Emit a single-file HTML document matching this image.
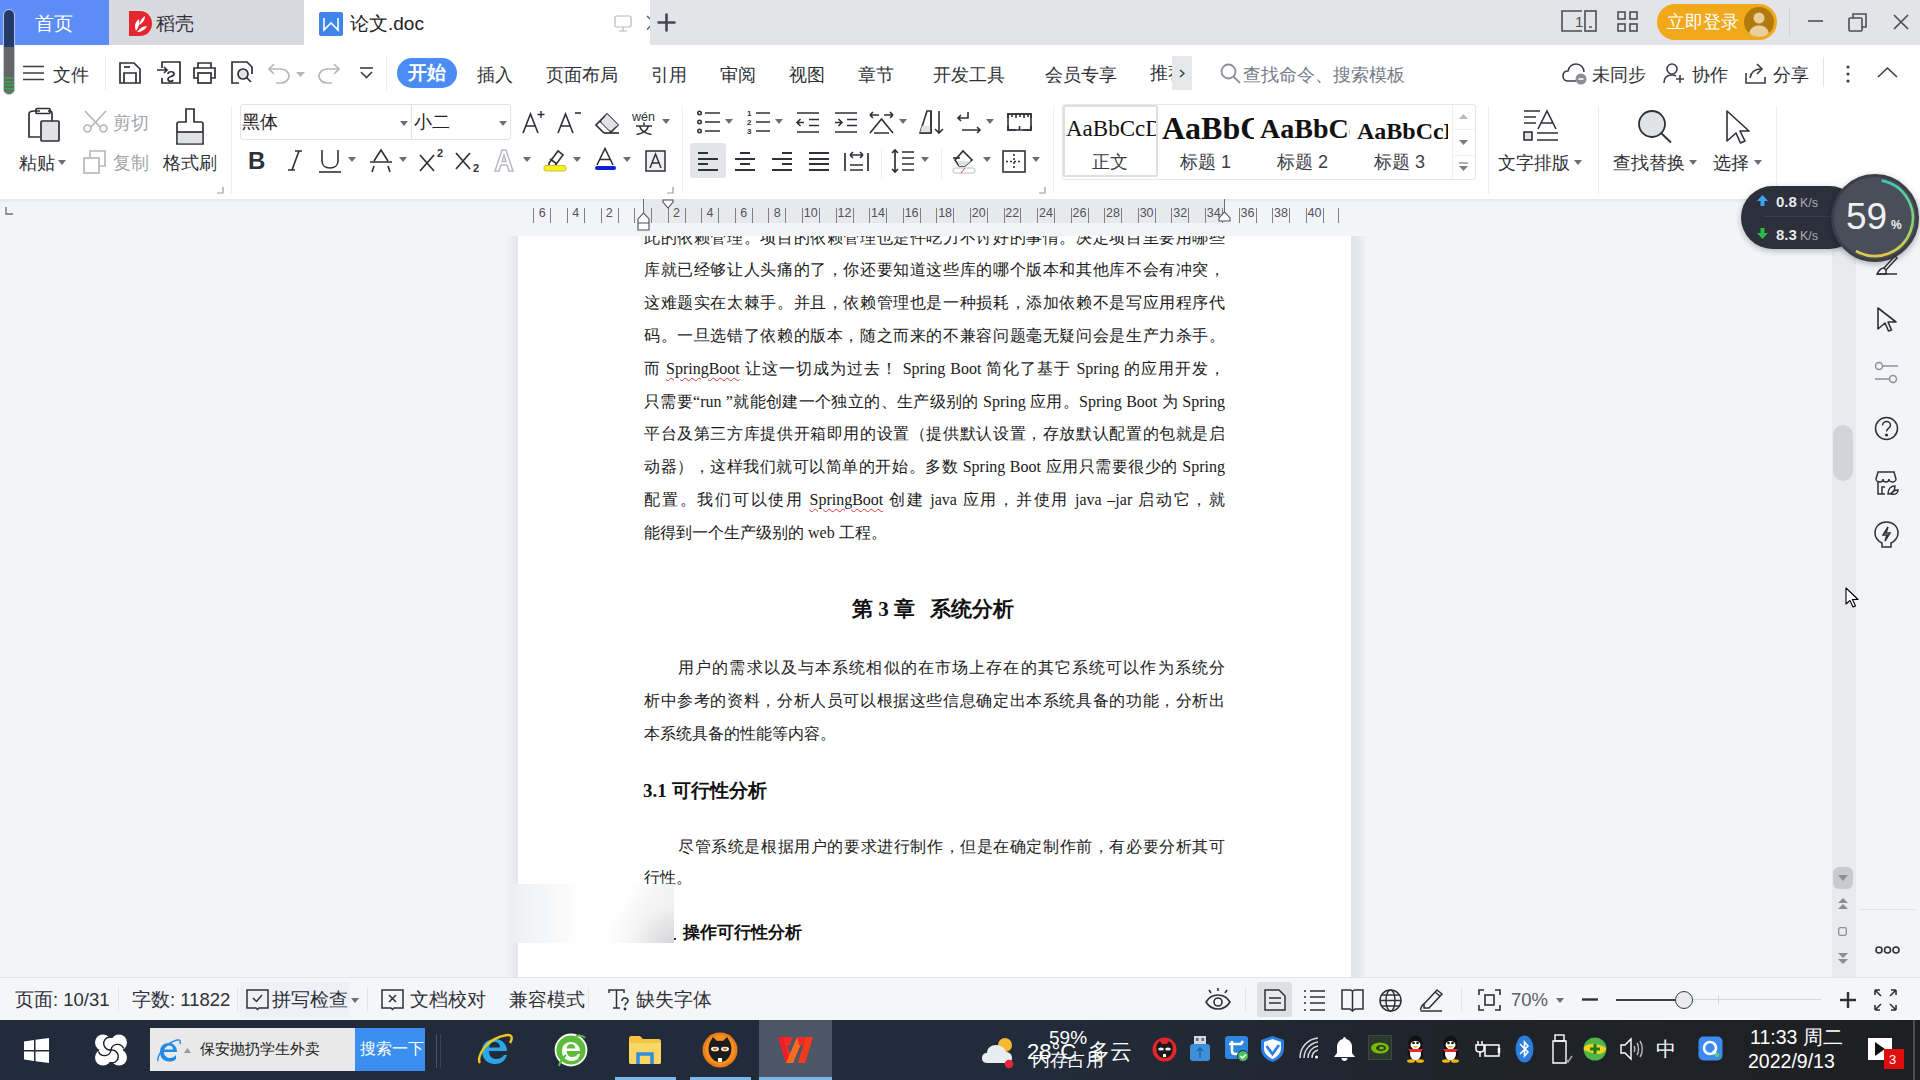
<!DOCTYPE html>
<html><head><meta charset="utf-8">
<style>
*{box-sizing:border-box;margin:0;padding:0}
html,body{width:1920px;height:1080px;overflow:hidden;background:#f3f4f7;font-family:"Liberation Sans",sans-serif;color:#2f3138}
.a{position:absolute}
svg{position:absolute;overflow:visible}
.t{position:absolute;white-space:nowrap;line-height:1}
#title{left:0;top:0;width:1920px;height:45px;background:#e3e4e8}
#menu{left:0;top:45px;width:1920px;height:55px;background:#fff}
#ribbon{left:0;top:100px;width:1920px;height:99px;background:#fff}
#ruler{left:0;top:199px;width:1832px;height:37px;background:#f3f4f7}
#page{left:518px;top:236px;width:833px;height:741px;background:#fff;overflow:hidden}
#status{left:0;top:977px;width:1920px;height:43px;background:#f5f6f8;border-top:1px solid #e3e4e8}
#task{left:0;top:1020px;width:1920px;height:60px;background:linear-gradient(90deg,#212b3b 0%,#222b39 55%,#1f2328 80%,#1e1f22 100%)}
.mi{font-size:18px;color:#2f3138}
.rt{font-size:18px;color:#2f3138}
.gray{color:#a3a5ab}
.doc{position:absolute;left:126px;width:581px;font-family:"Liberation Serif",serif;font-size:16px;line-height:17px;color:#1a1a1a;white-space:nowrap;text-align:justify;text-align-last:justify}
.doc.l{text-align-last:left}
u.sq{text-decoration:underline wavy #d9363e;text-decoration-thickness:1px;text-underline-offset:3px}
</style></head><body>
<!-- TITLE BAR -->
<div id="title" class="a">
  <div class="a" style="left:0;top:0;width:109px;height:45px;background:#5c8df6"></div>
  <div class="t" style="left:35px;top:15px;font-size:18.5px;color:#fff">首页</div>
  <div class="a" style="left:109px;top:0;width:195px;height:45px;background:#d9dadf"></div>
  <svg style="left:129px;top:11px" width="23" height="25" viewBox="0 0 23 25"><path d="M0 0H11C18 0 23 5.5 23 12.5S18 25 11 25H0Z" fill="#e5262f"/><path d="M7 20C5 15 6 11 10 8C11 12 10 16 7 20ZM8 21C11 17 14 15 18 15C16 19 12 21 8 21ZM10 14C11 10 13 7 16 5C16 9 14 12 10 14Z" fill="#fff"/></svg>
  <div class="t" style="left:156px;top:15px;font-size:18.5px;color:#2f3138">稻壳</div>
  <div class="a" style="left:304px;top:0;width:346px;height:45px;background:#fff"></div>
  <svg style="left:319px;top:12px" width="24" height="24" viewBox="0 0 24 24"><rect width="24" height="24" rx="2" fill="#3f86ec"/><path d="M5 6V18L12 11L19 18V6" stroke="#fff" stroke-width="1.6" fill="none" stroke-linejoin="miter"/></svg>
  <div class="t" style="left:350px;top:14px;font-size:19px;color:#1f2126">论文.doc</div>
  <svg style="left:614px;top:15px" width="18" height="17" viewBox="0 0 18 17"><rect x="1" y="1" width="16" height="11" rx="1.5" fill="none" stroke="#b5b7bd" stroke-width="1.2"/><path d="M9 12V16M5 16H13" stroke="#b5b7bd" stroke-width="1.2"/></svg>
  <svg style="left:647px;top:15px" width="4" height="16"><path d="M0 1L3.5 4.5M0 14.5L3.5 11" stroke="#555a66" stroke-width="1.3"/></svg><div class="a" style="left:650px;top:0;width:42px;height:45px;background:#e3e4e8"></div>
  <svg style="left:657px;top:13px" width="19" height="19" viewBox="0 0 19 19"><path d="M9.5 1.5V17.5M1.5 9.5H17.5" stroke="#3f4657" stroke-width="2.6" stroke-linecap="round"/></svg>
  <!-- right controls -->
  <svg style="left:1561px;top:10px" width="36" height="22" viewBox="0 0 36 22"><path d="M21 21H1V1H21" fill="none" stroke="#4b4e56" stroke-width="1.6"/><rect x="24" y="1" width="11" height="20" fill="none" stroke="#4b4e56" stroke-width="1.6"/><path d="M28 17H31" stroke="#4b4e56" stroke-width="1.4"/><text x="14" y="17" font-size="15" font-family="Liberation Sans" fill="#4b4e56">1</text></svg>
  <svg style="left:1617px;top:11px" width="21" height="21" viewBox="0 0 21 21" fill="none" stroke="#4b4e56" stroke-width="1.6"><rect x="1" y="1" width="7" height="7"/><rect x="13" y="1" width="7" height="7"/><rect x="1" y="13" width="7" height="7"/><rect x="13" y="13" width="7" height="7"/></svg>
  <div class="a" style="left:1657px;top:4px;width:120px;height:36px;border-radius:18px;background:#f1a81b"></div>
  <div class="t" style="left:1667px;top:13px;font-size:18px;color:#fff">立即登录</div>
  <svg style="left:1744px;top:7px" width="30" height="30" viewBox="0 0 30 30"><circle cx="15" cy="15" r="15" fill="#b07a0d"/><circle cx="15" cy="11" r="5.5" fill="#e8cf9a"/><path d="M5 26C7 20 11 18.5 15 18.5S23 20 25 26C22 29 18 30 15 30S8 29 5 26Z" fill="#e8cf9a"/></svg>
  <div class="a" style="left:1789px;top:8px;width:1px;height:28px;background:#cfd0d4"></div>
  <svg style="left:1808px;top:20px" width="15" height="2"><path d="M0 1H15" stroke="#4b4e56" stroke-width="1.6"/></svg>
  <svg style="left:1848px;top:13px" width="19" height="19" viewBox="0 0 19 19" fill="none" stroke="#4b4e56" stroke-width="1.6"><rect x="1" y="5" width="13" height="13" rx="1"/><path d="M5 5V1H18V14H14"/></svg>
  <svg style="left:1893px;top:14px" width="16" height="16" viewBox="0 0 16 16"><path d="M1 1L15 15M15 1L1 15" stroke="#4b4e56" stroke-width="1.7"/></svg>
</div>
<!-- MENU BAR -->
<div id="menu" class="a">
  <svg style="left:23px;top:20px" width="21" height="16" viewBox="0 0 21 16"><path d="M0 1.5H21M0 8H21M0 14.5H21" stroke="#3b3e46" stroke-width="1.7"/></svg>
  <div class="t mi" style="left:53px;top:20.5px">文件</div>
  <div class="a" style="left:105px;top:10px;width:1px;height:35px;background:#ececef"></div>
  <!-- save -->
  <svg style="left:119px;top:17px" width="22" height="22" viewBox="0 0 22 22" fill="none" stroke="#2f3138" stroke-width="1.7"><path d="M1 1H15L21 7V21H1Z"/><path d="M5 21V11H17V21"/><path d="M5 5H11"/></svg>
  <!-- export -->
  <svg style="left:157px;top:16px" width="24" height="23" viewBox="0 0 24 23" fill="none" stroke="#2f3138" stroke-width="1.7"><path d="M5 7V1H23V22H5V17"/><path d="M0 9H10M7 6L10 9L7 12"/><path d="M11 13C11 10 17 10 17 13C17 16 11 15 11 18C11 21 15 21 16 19"/></svg>
  <!-- print -->
  <svg style="left:193px;top:17px" width="23" height="22" viewBox="0 0 23 22" fill="none" stroke="#2f3138" stroke-width="1.7"><path d="M5 6V1H18V6"/><path d="M5 16H1V6H22V16H18"/><rect x="5" y="11" width="13" height="10"/></svg>
  <!-- preview -->
  <svg style="left:231px;top:16px" width="23" height="23" viewBox="0 0 23 23" fill="none" stroke="#2f3138" stroke-width="1.7"><path d="M8 22H1V1H16L21 6V13"/><circle cx="12" cy="13" r="5" fill="#e1e2e6"/><path d="M15.5 16.5L20 21"/></svg>
  <!-- undo -->
  <svg style="left:268px;top:18px" width="22" height="21" viewBox="0 0 22 21" fill="none" stroke="#b5b7bc" stroke-width="1.7"><path d="M6 1L1 6L6 11"/><path d="M1 6H13C17 6 21 9 21 13S17 20 13 20H8"/></svg>
  <svg style="left:296px;top:27px" width="9" height="5"><path d="M0 0H9L4.5 5Z" fill="#b5b7bc"/></svg>
  <!-- redo -->
  <svg style="left:318px;top:18px" width="22" height="21" viewBox="0 0 22 21" fill="none" stroke="#b5b7bc" stroke-width="1.7"><path d="M16 1L21 6L16 11"/><path d="M21 6H9C5 6 1 9 1 13S5 20 9 20H14"/></svg>
  <!-- more -->
  <svg style="left:360px;top:22px" width="13" height="12" viewBox="0 0 13 12" fill="none" stroke="#3b3e46" stroke-width="1.6"><path d="M0 1H13"/><path d="M1 5L6.5 10.5L12 5"/></svg>
  <div class="a" style="left:386px;top:10px;width:1px;height:35px;background:#ececef"></div>
  <div class="a" style="left:397px;top:13px;width:60px;height:30px;border-radius:15px;background:#4a8bf4"></div>
  <div class="t" style="left:408px;top:18px;font-size:19px;font-weight:bold;color:#fff">开始</div>
  <div class="t mi" style="left:477px;top:20.5px">插入</div>
  <div class="t mi" style="left:546px;top:20.5px">页面布局</div>
  <div class="t mi" style="left:651px;top:20.5px">引用</div>
  <div class="t mi" style="left:720px;top:20.5px">审阅</div>
  <div class="t mi" style="left:789px;top:20.5px">视图</div>
  <div class="t mi" style="left:858px;top:20.5px">章节</div>
  <div class="t mi" style="left:933px;top:20.5px">开发工具</div>
  <div class="t mi" style="left:1045px;top:20.5px">会员专享</div>
  <div class="a" style="left:1150px;top:15px;width:22px;height:28px;overflow:hidden"><div class="t mi" style="left:0;top:4px">推荐</div></div>
  <div class="a" style="left:1172px;top:11px;width:20px;height:34px;background:#e6e7eb"></div>
  <svg style="left:1179px;top:24px" width="6" height="9"><path d="M1 1L5 4.5L1 8" fill="none" stroke="#3b3e46" stroke-width="1.4"/></svg>
  <svg style="left:1220px;top:18px" width="21" height="21" viewBox="0 0 21 21" fill="none" stroke="#8d9099" stroke-width="1.8"><circle cx="8.5" cy="8.5" r="7"/><path d="M13.5 13.5L20 20"/></svg>
  <div class="t" style="left:1243px;top:20.5px;font-size:18px;color:#747a88">查找命令、搜索模板</div>
  <!-- right -->
  <svg style="left:1562px;top:18px" width="26" height="22" viewBox="0 0 26 22" fill="none" stroke="#3b3e46" stroke-width="1.6"><path d="M14 18H6C3 18 1 16 1 13C1 10 3 8 6 8C7 4 10 1 14 1C19 1 22 5 22 9"/><circle cx="19" cy="16" r="5.5" fill="#8b8e98" stroke="none"/><path d="M16.5 16H21.5" stroke="#fff" stroke-width="1.6"/></svg>
  <div class="t mi" style="left:1592px;top:20.5px">未同步</div>
  <svg style="left:1663px;top:18px" width="22" height="21" viewBox="0 0 22 21" fill="none" stroke="#3b3e46" stroke-width="1.6"><circle cx="9" cy="6" r="5"/><path d="M1 20C1 15 4 12 9 12C11 12 12 12.5 13 13"/><path d="M17 12V20M13 16H21"/></svg>
  <div class="t mi" style="left:1692px;top:20.5px">协作</div>
  <svg style="left:1745px;top:18px" width="21" height="21" viewBox="0 0 21 21" fill="none" stroke="#3b3e46" stroke-width="1.6"><path d="M1 10V20H20V14"/><path d="M5 15C6 9 10 6 16 6"/><path d="M12 1L17 6L12 11"/></svg>
  <div class="t mi" style="left:1773px;top:20.5px">分享</div>
  <div class="a" style="left:1823px;top:12px;width:1px;height:30px;background:#e3e4e8"></div>
  <svg style="left:1846px;top:20px" width="4" height="18"><circle cx="2" cy="2" r="1.6" fill="#3b3e46"/><circle cx="2" cy="9" r="1.6" fill="#3b3e46"/><circle cx="2" cy="16" r="1.6" fill="#3b3e46"/></svg>
  <svg style="left:1877px;top:22px" width="21" height="11"><path d="M1 10L10.5 1L20 10" fill="none" stroke="#3b3e46" stroke-width="1.6"/></svg>
</div>
<div id="ribbon" class="a">
  <!-- paste -->
  <svg style="left:28px;top:8px" width="32" height="34" viewBox="0 0 32 34" fill="none" stroke="#2f3138" stroke-width="1.7"><path d="M12 3H6C4 3 1 3 1 6V29H12"/><path d="M20 3H22C24 3 24 4 24 6V13"/><rect x="8" y="0.5" width="14" height="5" rx="1"/><rect x="13" y="13" width="18" height="20" rx="1" fill="#e1e2e6"/></svg>
  <div class="t rt" style="left:19px;top:54px">粘贴</div><svg style="left:58px;top:60px" width="8" height="5"><path d="M0 0H8L4 5Z" fill="#6b6e76"/></svg>
  <!-- cut -->
  <svg style="left:83px;top:10px" width="25" height="23" viewBox="0 0 25 23" fill="none" stroke="#b3b5ba" stroke-width="1.6"><path d="M2 1L17 17M23 1L8 17"/><circle cx="4.5" cy="18.5" r="3.5" fill="#fff"/><circle cx="20.5" cy="18.5" r="3.5" fill="#fff"/></svg>
  <div class="t rt gray" style="left:113px;top:14px">剪切</div>
  <svg style="left:83px;top:50px" width="23" height="24" viewBox="0 0 23 24" fill="none" stroke="#b3b5ba" stroke-width="1.6"><path d="M7 7V1H22V16H16"/><rect x="1" y="8" width="15" height="15"/></svg>
  <div class="t rt gray" style="left:113px;top:54px">复制</div>
  <!-- format brush -->
  <svg style="left:176px;top:8px" width="28" height="37" viewBox="0 0 28 37" fill="none" stroke="#2f3138" stroke-width="1.7"><path d="M10 1H18V14H25C26 14 27 15 27 16V36H1V16C1 15 2 14 3 14H10Z"/><path d="M1.8 24H26.2V35.2H1.8Z" fill="#e1e2e6" stroke="none"/><path d="M1 24H27"/></svg>
  <div class="t rt" style="left:163px;top:54px">格式刷</div>
  <svg style="left:217px;top:87px" width="7" height="7"><path d="M6 0V6H0" fill="none" stroke="#9a9ca2" stroke-width="1.2"/></svg>
  <div class="a" style="left:231px;top:6px;width:1px;height:88px;background:#eeeff2"></div>
  <!-- font box -->
  <div class="a" style="left:240px;top:4px;width:271px;height:36px;border:1px solid #e2e3e7;border-radius:3px"></div>
  <div class="a" style="left:411px;top:5px;width:1px;height:34px;background:#e2e3e7"></div>
  <div class="t" style="left:242px;top:13px;font-size:18px;color:#1f2126">黑体</div><svg style="left:400px;top:21px" width="8" height="5"><path d="M0 0H8L4 5Z" fill="#6b6e76"/></svg>
  <div class="t" style="left:414px;top:13px;font-size:18px;color:#1f2126">小二</div><svg style="left:499px;top:21px" width="8" height="5"><path d="M0 0H8L4 5Z" fill="#6b6e76"/></svg>
  <!-- A+ A- eraser wen -->
  <svg style="left:522px;top:10px" width="24" height="24" viewBox="0 0 24 24" fill="none" stroke="#2f3138" stroke-width="1.6"><path d="M1 23L8.5 4L16 23M4 16H13"/><path d="M19 1V8M15.5 4.5H22.5" stroke-width="1.4"/></svg>
  <svg style="left:557px;top:10px" width="25" height="24" viewBox="0 0 25 24" fill="none" stroke="#2f3138" stroke-width="1.6"><path d="M1 23L8.5 4L16 23M4 16H13"/><path d="M18 3H24" stroke-width="1.6"/></svg>
  <svg style="left:595px;top:13px" width="26" height="21" viewBox="0 0 26 21" fill="none" stroke="#2f3138" stroke-width="1.7"><path d="M9 20L1 12L12 1L23 12L15 20"/><path d="M5 8L16 19" /><path d="M6.5 9.5L12 1L23 12L14.5 17.5Z" fill="#e1e2e6" stroke="none"/><path d="M9 20H24"/></svg>
  <div class="t" style="left:632px;top:11px;font-size:12.5px;color:#2f3138">wén</div>
  <svg style="left:634px;top:120px;display:none"></svg><svg style="left:635px;top:21px" width="18" height="14" viewBox="0 0 18 14" fill="none" stroke="#2f3138" stroke-width="1.5"><path d="M1 5H17M9 1.5V4M4.5 5C6 10 10 12.5 16.5 13.5M13.5 5C12 10 8 12.5 1.5 13.5"/></svg><svg style="left:662px;top:19px" width="8" height="5"><path d="M0 0H8L4 5Z" fill="#6b6e76"/></svg>
  <!-- row2 -->
  <div class="t" style="left:248px;top:49px;font-size:24px;font-weight:bold;color:#2f3138">B</div>
  <svg style="left:287px;top:49px" width="15" height="23" viewBox="0 0 15 23"><path d="M8 2H15M1 21H8M12 2L5 21" fill="none" stroke="#2f3138" stroke-width="1.6"/></svg>
  <svg style="left:318px;top:49px" width="24" height="24" viewBox="0 0 24 24" fill="none" stroke="#2f3138" stroke-width="1.6"><path d="M4 1V12C4 16 7 19 12 19S20 16 20 12V1"/><path d="M1 23H23"/></svg><svg style="left:348px;top:57px" width="8" height="5"><path d="M0 0H8L4 5Z" fill="#6b6e76"/></svg>
  <svg style="left:369px;top:49px" width="24" height="24" viewBox="0 0 24 24" fill="none" stroke="#2f3138" stroke-width="1.6"><path d="M5 12L12 1L19 12M3 23L5 17M21 23L19 17M1 13H23"/></svg><svg style="left:399px;top:57px" width="8" height="5"><path d="M0 0H8L4 5Z" fill="#6b6e76"/></svg>
  <svg style="left:419px;top:52px" width="25" height="20" viewBox="0 0 25 20" fill="none" stroke="#2f3138" stroke-width="1.7"><path d="M1 3L15 19M15 3L1 19"/></svg>
  <div class="t" style="left:437px;top:48px;font-size:11px;font-weight:bold;color:#2f3138">2</div>
  <svg style="left:455px;top:52px" width="25" height="20" viewBox="0 0 25 20" fill="none" stroke="#2f3138" stroke-width="1.7"><path d="M1 1L15 17M15 1L1 17"/></svg>
  <div class="t" style="left:473px;top:63px;font-size:11px;font-weight:bold;color:#2f3138">2</div>
  <svg style="left:494px;top:49px" width="20" height="23" viewBox="0 0 20 23" fill="none" stroke="#b9bbc0" stroke-width="1.5"><path d="M1 22L8 1H12L19 22H15L13 16H7L5 22Z"/><path d="M8 12.5H12L10 6Z"/></svg><svg style="left:523px;top:57px" width="8" height="5"><path d="M0 0H8L4 5Z" fill="#6b6e76"/></svg>
  <svg style="left:543px;top:47px" width="24" height="28" viewBox="0 0 24 28" fill="none" stroke="#2f3138" stroke-width="1.6"><path d="M6 16L15 4L20 8L11 20H6Z"/><path d="M7 12L14 17"/><rect x="1" y="18.5" width="22" height="5.5" rx="2" fill="#f5f020" stroke="#c9c33a" stroke-width="1"/></svg><svg style="left:573px;top:57px" width="8" height="5"><path d="M0 0H8L4 5Z" fill="#6b6e76"/></svg>
  <svg style="left:593px;top:47px" width="24" height="27" viewBox="0 0 24 27" fill="none" stroke="#2f3138" stroke-width="1.6"><path d="M4 18L12 1.5L20 18M7 12.5H17"/><rect x="2" y="19" width="21" height="4" rx="2" fill="#0e22d8" stroke="none"/></svg><svg style="left:623px;top:57px" width="8" height="5"><path d="M0 0H8L4 5Z" fill="#6b6e76"/></svg>
  <svg style="left:645px;top:50px" width="21" height="22" viewBox="0 0 21 22" fill="none" stroke="#2f3138" stroke-width="1.5"><rect x="1" y="1" width="19" height="20" fill="#f0f0f2"/><path d="M5 18L10.5 4L16 18M7 13H14"/></svg>
  <svg style="left:667px;top:87px" width="7" height="7"><path d="M6 0V6H0" fill="none" stroke="#9a9ca2" stroke-width="1.2"/></svg>
  <div class="a" style="left:682px;top:6px;width:1px;height:88px;background:#eeeff2"></div>
  <!-- paragraph row1 -->
  <svg style="left:697px;top:10px" width="24" height="24" viewBox="0 0 24 24" fill="none" stroke="#2f3138" stroke-width="1.6"><circle cx="2.5" cy="3" r="1.7"/><circle cx="2.5" cy="12" r="1.7"/><circle cx="2.5" cy="21" r="1.7"/><path d="M8 3H23M8 12H23M8 21H23"/></svg><svg style="left:725px;top:19px" width="8" height="5"><path d="M0 0H8L4 5Z" fill="#6b6e76"/></svg>
  <svg style="left:747px;top:9px" width="24" height="25" viewBox="0 0 24 25" fill="none" stroke="#2f3138" stroke-width="1.6"><path d="M9 4H23M9 13H23M9 22H23"/><text x="0" y="7" font-size="8" font-family="Liberation Sans" font-weight="bold" fill="#2f3138" stroke="none">1</text><text x="0" y="16" font-size="8" font-family="Liberation Sans" font-weight="bold" fill="#2f3138" stroke="none">2</text><text x="0" y="25" font-size="8" font-family="Liberation Sans" font-weight="bold" fill="#2f3138" stroke="none">3</text></svg><svg style="left:775px;top:19px" width="8" height="5"><path d="M0 0H8L4 5Z" fill="#6b6e76"/></svg>
  <svg style="left:796px;top:12px" width="24" height="21" viewBox="0 0 24 21" fill="none" stroke="#2f3138" stroke-width="1.6"><path d="M1 1H23M13 7.5H23M13 13.5H23M1 20H23M8 10.5H1M4.5 7L1 10.5L4.5 14"/></svg>
  <svg style="left:834px;top:12px" width="24" height="21" viewBox="0 0 24 21" fill="none" stroke="#2f3138" stroke-width="1.6"><path d="M1 1H23M13 7.5H23M13 13.5H23M1 20H23M1 10.5H8M4.5 7L8 10.5L4.5 14"/></svg>
  <svg style="left:869px;top:11px" width="25" height="23" viewBox="0 0 25 23" fill="none" stroke="#2f3138" stroke-width="1.6"><path d="M1 4H10M1 4L4 1M1 4L4 7M15 4H24M24 4L21 1M24 4L21 7"/><path d="M1 22L12.5 8L24 22M5 22H20"/></svg><svg style="left:899px;top:19px" width="8" height="5"><path d="M0 0H8L4 5Z" fill="#6b6e76"/></svg>
  <svg style="left:919px;top:10px" width="26" height="25" viewBox="0 0 26 25" fill="none" stroke="#2f3138" stroke-width="1.6"><path d="M1 23L8 1H12V23Z"/><path d="M3 16H12V23H1Z" fill="#e1e2e6" stroke="none"/><path d="M1 23H12V1"/><path d="M20 1V23M16 19L20 23L24 19"/></svg>
  <svg style="left:957px;top:11px" width="24" height="23" viewBox="0 0 24 23" fill="none" stroke="#2f3138" stroke-width="1.6"><path d="M11 1V7H1M4 4L1 7L4 10"/><path d="M5 19H23M20 16L23 19L20 22"/></svg><svg style="left:986px;top:19px" width="8" height="5"><path d="M0 0H8L4 5Z" fill="#6b6e76"/></svg>
  <svg style="left:1007px;top:13px" width="25" height="18" viewBox="0 0 25 18" fill="none" stroke="#2f3138" stroke-width="1.6"><path d="M1 1H24V17H1Z" stroke-dasharray="none"/><path d="M1 5V1H24V5M5 1V4M9 1V5M13 1V4M17 1V5M21 1V4M1 13V17H9M16 17H24V13M12.5 13V17"/><path d="M1 13V17M24 13V17" /></svg>
  <!-- paragraph row2 -->
  <div class="a" style="left:690px;top:43px;width:36px;height:35px;border-radius:3px;background:#e4e5e9"></div>
  <svg style="left:697px;top:52px" width="22" height="19" viewBox="0 0 22 19" fill="none" stroke="#2f3138" stroke-width="1.8"><path d="M1 1H11M1 7H21M1 12H11M1 18H21"/></svg>
  <svg style="left:734px;top:52px" width="22" height="19" viewBox="0 0 22 19" fill="none" stroke="#2f3138" stroke-width="1.8"><path d="M6 1H16M1 7H21M6 12H16M1 18H21"/></svg>
  <svg style="left:771px;top:52px" width="22" height="19" viewBox="0 0 22 19" fill="none" stroke="#2f3138" stroke-width="1.8"><path d="M11 1H21M1 7H21M11 12H21M1 18H21"/></svg>
  <svg style="left:808px;top:52px" width="22" height="19" viewBox="0 0 22 19" fill="none" stroke="#2f3138" stroke-width="1.8"><path d="M1 1H21M1 7H21M1 12H21M1 18H21"/></svg>
  <svg style="left:844px;top:50px" width="25" height="22" viewBox="0 0 25 22" fill="none" stroke="#2f3138" stroke-width="1.7"><path d="M1 3V21M24 3V21M6 15H19M6 20H19M6 5H19M6 5L9 2M6 5L9 8M19 5L16 2M19 5L16 8"/></svg>
  <div class="a" style="left:881px;top:49px;width:1px;height:30px;background:#eeeff2"></div>
  <svg style="left:891px;top:49px" width="24" height="24" viewBox="0 0 24 24" fill="none" stroke="#2f3138" stroke-width="1.7"><path d="M4 1V23M1 4L4 1L7 4M1 20L4 23L7 20M11 3H23M11 9H23M11 15H23M11 21H23"/></svg><svg style="left:921px;top:57px" width="8" height="5"><path d="M0 0H8L4 5Z" fill="#6b6e76"/></svg>
  <div class="a" style="left:941px;top:49px;width:1px;height:30px;background:#eeeff2"></div>
  <svg style="left:952px;top:49px" width="25" height="25" viewBox="0 0 25 25" fill="none" stroke="#2f3138" stroke-width="1.6"><path d="M3 11L11 2L20 11L13 17H7Z"/><path d="M6 12H19L13 17H7Z" fill="#e1e2e6" stroke="none"/><path d="M1 9H8"/><rect x="1" y="19" width="22" height="5" rx="2" stroke="#b9bbc0" stroke-width="1"/><path d="M9 24L13 19" stroke="#e0505a" stroke-width="1"/></svg><svg style="left:983px;top:57px" width="8" height="5"><path d="M0 0H8L4 5Z" fill="#6b6e76"/></svg>
  <svg style="left:1002px;top:50px" width="24" height="23" viewBox="0 0 24 23" fill="none" stroke="#2f3138" stroke-width="1.6"><rect x="1" y="1" width="22" height="21"/><path d="M12 4V19M4 11.5H20" stroke-dasharray="2 2"/></svg><svg style="left:1032px;top:57px" width="8" height="5"><path d="M0 0H8L4 5Z" fill="#6b6e76"/></svg>
  <svg style="left:1039px;top:87px" width="7" height="7"><path d="M6 0V6H0" fill="none" stroke="#9a9ca2" stroke-width="1.2"/></svg>
  <div class="a" style="left:1053px;top:6px;width:1px;height:88px;background:#eeeff2"></div>
  <!-- styles gallery -->
  <div class="a" style="left:1062px;top:4px;width:414px;height:76px;border:1px solid #e6e7ea;border-radius:3px"></div>
  <div class="a" style="left:1063px;top:5px;width:95px;height:72px;border:2px solid #dedfe3;border-radius:2px"></div>
  <div class="a" style="left:1065px;top:13px;width:91px;height:30px;overflow:hidden"><div class="t" style="left:1px;top:4px;font-family:'Liberation Serif',serif;font-size:23px;color:#111">AaBbCcDd</div></div>
  <div class="t" style="left:1092px;top:53px;font-size:18px;color:#3b3e46">正文</div>
  <div class="a" style="left:1161px;top:10px;width:93px;height:34px;overflow:hidden"><div class="t" style="left:1px;top:2px;font-family:'Liberation Serif',serif;font-size:32px;font-weight:bold;color:#111">AaBbCc</div></div>
  <div class="t" style="left:1180px;top:53px;font-size:18px;color:#3b3e46">标题 1</div>
  <div class="a" style="left:1259px;top:12px;width:91px;height:32px;overflow:hidden"><div class="t" style="left:1px;top:3px;font-family:'Liberation Serif',serif;font-size:28px;font-weight:bold;color:#111">AaBbCc</div></div>
  <div class="t" style="left:1277px;top:53px;font-size:18px;color:#3b3e46">标题 2</div>
  <div class="a" style="left:1356px;top:14px;width:92px;height:30px;overflow:hidden"><div class="t" style="left:1px;top:5px;font-family:'Liberation Serif',serif;font-size:24px;font-weight:bold;color:#111">AaBbCcDd</div></div>
  <div class="t" style="left:1374px;top:53px;font-size:18px;color:#3b3e46">标题 3</div>
  <div class="a" style="left:1452px;top:5px;width:1px;height:74px;background:#eeeff2"></div>
  <div class="a" style="left:1453px;top:29px;width:22px;height:1px;background:#eeeff2"></div>
  <div class="a" style="left:1453px;top:55px;width:22px;height:1px;background:#eeeff2"></div>
  <svg style="left:1459px;top:14px" width="9" height="5"><path d="M0 5H9L4.5 0Z" fill="#b7b9be"/></svg>
  <svg style="left:1459px;top:40px" width="9" height="5"><path d="M0 0H9L4.5 5Z" fill="#7a7d85"/></svg>
  <svg style="left:1459px;top:62px" width="9" height="9"><path d="M0 1H9" stroke="#7a7d85" stroke-width="1.2"/><path d="M0 4H9L4.5 9Z" fill="#7a7d85"/></svg>
  <div class="a" style="left:1488px;top:6px;width:1px;height:88px;background:#eeeff2"></div>
  <!-- text layout -->
  <svg style="left:1523px;top:10px" width="36" height="32" viewBox="0 0 36 32" fill="none" stroke="#2f3138" stroke-width="1.6"><path d="M1 1H17M1 7H13M1 13H13"/><path d="M15 19L24 1L33 19M18 13H30"/><rect x="1" y="22" width="8" height="8" fill="#e1e2e6"/><path d="M14 23H35M14 30H35"/></svg>
  <div class="t rt" style="left:1498px;top:54px">文字排版</div><svg style="left:1574px;top:60px" width="8" height="5"><path d="M0 0H8L4 5Z" fill="#6b6e76"/></svg>
  <div class="a" style="left:1598px;top:6px;width:1px;height:88px;background:#eeeff2"></div>
  <svg style="left:1638px;top:10px" width="34" height="33" viewBox="0 0 34 33" fill="none" stroke="#2f3138" stroke-width="1.8"><circle cx="14" cy="14" r="13" fill="#e1e2e6"/><path d="M23.5 23.5L33 32.5"/></svg>
  <div class="t rt" style="left:1613px;top:54px">查找替换</div><svg style="left:1689px;top:60px" width="8" height="5"><path d="M0 0H8L4 5Z" fill="#6b6e76"/></svg>
  <svg style="left:1726px;top:10px" width="24" height="33" viewBox="0 0 24 33" fill="none" stroke="#2f3138" stroke-width="1.6"><path d="M1 1L23 21H14L19 31L14.5 33L10 23L1 31Z" stroke-linejoin="round"/></svg>
  <div class="t rt" style="left:1713px;top:54px">选择</div><svg style="left:1754px;top:60px" width="8" height="5"><path d="M0 0H8L4 5Z" fill="#6b6e76"/></svg>
  <div class="a" style="left:1776px;top:6px;width:1px;height:88px;background:#eeeff2"></div>
</div>
<div id="ruler" class="a">
  <div class="a" style="left:0;top:0;width:1832px;height:4px;background:linear-gradient(#e6e7ea,#f3f4f7)"></div>
  <svg style="left:5px;top:8px" width="8" height="8"><path d="M1 0V7H8" fill="none" stroke="#6d7078" stroke-width="1.3"/></svg>
  <div class="a" style="left:643px;top:0;width:582px;height:24px;background:#e8e9ed"></div>
  <div class="a" style="left:533px;top:9px;width:1px;height:15px;background:#7d8087"></div><div class="a" style="left:550px;top:9px;width:1px;height:15px;background:#7d8087"></div><div class="a" style="left:567px;top:9px;width:1px;height:15px;background:#7d8087"></div><div class="a" style="left:584px;top:9px;width:1px;height:15px;background:#7d8087"></div><div class="a" style="left:601px;top:9px;width:1px;height:15px;background:#7d8087"></div><div class="a" style="left:618px;top:9px;width:1px;height:15px;background:#7d8087"></div><div class="a" style="left:634px;top:9px;width:1px;height:15px;background:#7d8087"></div><div class="a" style="left:651px;top:9px;width:1px;height:15px;background:#7d8087"></div><div class="a" style="left:668px;top:9px;width:1px;height:15px;background:#7d8087"></div><div class="a" style="left:685px;top:9px;width:1px;height:15px;background:#7d8087"></div><div class="a" style="left:701px;top:9px;width:1px;height:15px;background:#7d8087"></div><div class="a" style="left:718px;top:9px;width:1px;height:15px;background:#7d8087"></div><div class="a" style="left:735px;top:9px;width:1px;height:15px;background:#7d8087"></div><div class="a" style="left:752px;top:9px;width:1px;height:15px;background:#7d8087"></div><div class="a" style="left:768px;top:9px;width:1px;height:15px;background:#7d8087"></div><div class="a" style="left:785px;top:9px;width:1px;height:15px;background:#7d8087"></div><div class="a" style="left:802px;top:9px;width:1px;height:15px;background:#7d8087"></div><div class="a" style="left:819px;top:9px;width:1px;height:15px;background:#7d8087"></div><div class="a" style="left:836px;top:9px;width:1px;height:15px;background:#7d8087"></div><div class="a" style="left:853px;top:9px;width:1px;height:15px;background:#7d8087"></div><div class="a" style="left:869px;top:9px;width:1px;height:15px;background:#7d8087"></div><div class="a" style="left:886px;top:9px;width:1px;height:15px;background:#7d8087"></div><div class="a" style="left:903px;top:9px;width:1px;height:15px;background:#7d8087"></div><div class="a" style="left:920px;top:9px;width:1px;height:15px;background:#7d8087"></div><div class="a" style="left:936px;top:9px;width:1px;height:15px;background:#7d8087"></div><div class="a" style="left:953px;top:9px;width:1px;height:15px;background:#7d8087"></div><div class="a" style="left:970px;top:9px;width:1px;height:15px;background:#7d8087"></div><div class="a" style="left:987px;top:9px;width:1px;height:15px;background:#7d8087"></div><div class="a" style="left:1004px;top:9px;width:1px;height:15px;background:#7d8087"></div><div class="a" style="left:1020px;top:9px;width:1px;height:15px;background:#7d8087"></div><div class="a" style="left:1037px;top:9px;width:1px;height:15px;background:#7d8087"></div><div class="a" style="left:1054px;top:9px;width:1px;height:15px;background:#7d8087"></div><div class="a" style="left:1071px;top:9px;width:1px;height:15px;background:#7d8087"></div><div class="a" style="left:1088px;top:9px;width:1px;height:15px;background:#7d8087"></div><div class="a" style="left:1104px;top:9px;width:1px;height:15px;background:#7d8087"></div><div class="a" style="left:1121px;top:9px;width:1px;height:15px;background:#7d8087"></div><div class="a" style="left:1138px;top:9px;width:1px;height:15px;background:#7d8087"></div><div class="a" style="left:1155px;top:9px;width:1px;height:15px;background:#7d8087"></div><div class="a" style="left:1171px;top:9px;width:1px;height:15px;background:#7d8087"></div><div class="a" style="left:1188px;top:9px;width:1px;height:15px;background:#7d8087"></div><div class="a" style="left:1205px;top:9px;width:1px;height:15px;background:#7d8087"></div><div class="a" style="left:1222px;top:9px;width:1px;height:15px;background:#7d8087"></div><div class="a" style="left:1239px;top:9px;width:1px;height:15px;background:#7d8087"></div><div class="a" style="left:1256px;top:9px;width:1px;height:15px;background:#7d8087"></div><div class="a" style="left:1272px;top:9px;width:1px;height:15px;background:#7d8087"></div><div class="a" style="left:1289px;top:9px;width:1px;height:15px;background:#7d8087"></div><div class="a" style="left:1306px;top:9px;width:1px;height:15px;background:#7d8087"></div><div class="a" style="left:1323px;top:9px;width:1px;height:15px;background:#7d8087"></div><div class="t" style="left:522.2px;width:40px;text-align:center;top:8px;font-size:12.5px;color:#50535a">6</div><div class="t" style="left:555.8px;width:40px;text-align:center;top:8px;font-size:12.5px;color:#50535a">4</div><div class="t" style="left:589.3px;width:40px;text-align:center;top:8px;font-size:12.5px;color:#50535a">2</div><div class="t" style="left:656.5px;width:40px;text-align:center;top:8px;font-size:12.5px;color:#50535a">2</div><div class="t" style="left:690.1px;width:40px;text-align:center;top:8px;font-size:12.5px;color:#50535a">4</div><div class="t" style="left:723.7px;width:40px;text-align:center;top:8px;font-size:12.5px;color:#50535a">6</div><div class="t" style="left:757.2px;width:40px;text-align:center;top:8px;font-size:12.5px;color:#50535a">8</div><div class="t" style="left:790.8px;width:40px;text-align:center;top:8px;font-size:12.5px;color:#50535a">10</div><div class="t" style="left:824.4px;width:40px;text-align:center;top:8px;font-size:12.5px;color:#50535a">12</div><div class="t" style="left:858.0px;width:40px;text-align:center;top:8px;font-size:12.5px;color:#50535a">14</div><div class="t" style="left:891.6px;width:40px;text-align:center;top:8px;font-size:12.5px;color:#50535a">16</div><div class="t" style="left:925.1px;width:40px;text-align:center;top:8px;font-size:12.5px;color:#50535a">18</div><div class="t" style="left:958.7px;width:40px;text-align:center;top:8px;font-size:12.5px;color:#50535a">20</div><div class="t" style="left:992.3px;width:40px;text-align:center;top:8px;font-size:12.5px;color:#50535a">22</div><div class="t" style="left:1025.9px;width:40px;text-align:center;top:8px;font-size:12.5px;color:#50535a">24</div><div class="t" style="left:1059.5px;width:40px;text-align:center;top:8px;font-size:12.5px;color:#50535a">26</div><div class="t" style="left:1093.0px;width:40px;text-align:center;top:8px;font-size:12.5px;color:#50535a">28</div><div class="t" style="left:1126.6px;width:40px;text-align:center;top:8px;font-size:12.5px;color:#50535a">30</div><div class="t" style="left:1160.2px;width:40px;text-align:center;top:8px;font-size:12.5px;color:#50535a">32</div><div class="t" style="left:1193.8px;width:40px;text-align:center;top:8px;font-size:12.5px;color:#50535a">34</div><div class="t" style="left:1227.4px;width:40px;text-align:center;top:8px;font-size:12.5px;color:#50535a">36</div><div class="t" style="left:1260.9px;width:40px;text-align:center;top:8px;font-size:12.5px;color:#50535a">38</div><div class="t" style="left:1294.5px;width:40px;text-align:center;top:8px;font-size:12.5px;color:#50535a">40</div>
  <div class="a" style="left:1338px;top:9px;width:1px;height:15px;background:#7d8087"></div>
  <div class="a" style="left:643px;top:0;width:1px;height:14px;background:#6d7078"></div>
  <svg style="left:637px;top:13px" width="13" height="19" viewBox="0 0 13 19"><path d="M1 18V7L6.5 1L12 7V18Z M1 11H12" fill="#fff" stroke="#4b4e56" stroke-width="1.1"/></svg>
  <svg style="left:662px;top:0px" width="12" height="10" viewBox="0 0 12 10"><path d="M1 1H11V3L6 9L1 3Z" fill="#fff" stroke="#4b4e56" stroke-width="1.1"/></svg>
  <div class="a" style="left:1224px;top:0;width:1px;height:13px;background:#6d7078"></div>
  <svg style="left:1218px;top:12px" width="13" height="11" viewBox="0 0 13 11"><path d="M1 10V7L6.5 1L12 7V10Z" fill="#fff" stroke="#4b4e56" stroke-width="1.1"/></svg>
</div>
<div id="page" class="a">
<div class="doc" style="top:-7px">此的依赖管理。项目的依赖管理也是件吃力不讨好的事情。决定项目里要用哪些</div>
<div class="doc" style="top:25.0px">库就已经够让人头痛的了，你还要知道这些库的哪个版本和其他库不会有冲突，</div>
<div class="doc" style="top:57.5px">这难题实在太棘手。并且，依赖管理也是一种损耗，添加依赖不是写应用程序代</div>
<div class="doc" style="top:90.5px">码。一旦选错了依赖的版本，随之而来的不兼容问题毫无疑问会是生产力杀手。</div>
<div class="doc" style="top:123.5px">而 <u class=sq>SpringBoot</u> 让这一切成为过去！ Spring Boot  简化了基于 Spring 的应用开发，</div>
<div class="doc" style="top:156.5px">只需要“run ”就能创建一个独立的、生产级别的 Spring 应用。Spring Boot 为 Spring</div>
<div class="doc" style="top:189.0px">平台及第三方库提供开箱即用的设置（提供默认设置，存放默认配置的包就是启</div>
<div class="doc" style="top:221.5px">动器），这样我们就可以简单的开始。多数 Spring Boot 应用只需要很少的 Spring</div>
<div class="doc" style="top:254.5px">配置。我们可以使用 <u class=sq>SpringBoot</u> 创建 java 应用，并使用 java  –jar  启动它，就</div>
<div class="doc l" style="top:287.5px">能得到一个生产级别的 web 工程。</div>
<div class="t" style="left:334px;top:362.5px;font-family:'Liberation Serif',serif;font-size:21px;font-weight:bold;color:#111">第 3 章</div><div class="t" style="left:412px;top:362.5px;font-family:'Liberation Serif',serif;font-size:21px;font-weight:bold;color:#111">系统分析</div>
<div class="doc" style="left:160px;width:547px;top:422.9px;color:#222">用户的需求以及与本系统相似的在市场上存在的其它系统可以作为系统分</div>
<div class="doc" style="top:455.5px;color:#222">析中参考的资料，分析人员可以根据这些信息确定出本系统具备的功能，分析出</div>
<div class="doc l" style="top:488.5px;color:#222">本系统具备的性能等内容。</div>
<div class="t" style="left:125px;top:544.5px;font-family:'Liberation Serif',serif;font-size:19px;font-weight:bold;color:#111">3.1 可行性分析</div>
<div class="doc" style="left:160px;width:547px;top:601.5px;color:#222">尽管系统是根据用户的要求进行制作，但是在确定制作前，有必要分析其可</div>
<div class="doc l" style="top:632.5px;color:#222">行性。</div>
<div class="t" style="left:165px;top:688px;font-family:'Liberation Serif',serif;font-size:17px;font-weight:bold;color:#111">操作可行性分析</div><div class="a" style="left:156px;top:702px;width:2px;height:2px;background:#333"></div>
</div>
<div class="a" style="left:506px;top:236px;width:12px;height:741px;background:linear-gradient(90deg,#f3f4f7,#e4e5e9)"></div>
<div class="a" style="left:1351px;top:236px;width:16px;height:741px;background:linear-gradient(90deg,#e2e3e7 0%,#e6e7ea 45%,#f3f4f7 100%)"></div>
<div class="a" style="left:510px;top:884px;width:164px;height:59px;background:radial-gradient(ellipse 70px 60px at 164px 59px,#d6d6d8 0%,rgba(240,240,242,0.6) 60%,rgba(255,255,255,0) 100%),linear-gradient(90deg,#eceef1 0%,#f7f8f9 25%,#fff 45%,#fff 70%,#f2f2f3 100%)"></div>

<!-- scrollbar & sidebar -->
<div class="a" style="left:1832px;top:236px;width:24px;height:741px;background:#e9eaee"></div>
<div class="a" style="left:1833px;top:425px;width:20px;height:56px;border-radius:10px;background:#d3d4d9"></div>
<div class="a" style="left:1833px;top:867px;width:20px;height:22px;border-radius:6px;background:#c9cacf"></div>
<svg style="left:1838px;top:875px" width="10" height="6"><path d="M0 0H10L5 6Z" fill="#8a8e9b"/></svg>
<svg style="left:1838px;top:898px" width="10" height="12"><path d="M0 5H10L5 0Z M0 11H10L5 6Z" fill="#8a8e9b"/></svg>
<svg style="left:1838px;top:927px" width="9" height="9"><rect x="0.7" y="0.7" width="7.6" height="7.6" rx="1.5" fill="none" stroke="#8a8e9b" stroke-width="1.3"/></svg>
<svg style="left:1838px;top:953px" width="10" height="12"><path d="M0 0H10L5 5Z M0 6H10L5 11Z" fill="#8a8e9b"/></svg>
<div class="a" style="left:1856px;top:199px;width:64px;height:778px;background:#f3f4f7"></div>
<div class="a" style="left:1859px;top:909px;width:57px;height:1px;background:#e1e2e6"></div>

<svg style="left:1877px;top:307px" width="20" height="25" viewBox="0 0 20 25" fill="none" stroke="#2f3138" stroke-width="1.6"><path d="M1 1L19 15H11L14.5 23L11.5 24L8 16L1 22Z" stroke-linejoin="round"/></svg>
<svg style="left:1874px;top:361px" width="25" height="23" viewBox="0 0 25 23" fill="none" stroke="#8d9099" stroke-width="1.5"><circle cx="5" cy="5" r="3.5"/><path d="M9 5H24M1 18H15"/><circle cx="19" cy="18" r="3.5"/></svg>
<svg style="left:1874px;top:416px" width="25" height="25" viewBox="0 0 25 25" fill="none" stroke="#2f3138" stroke-width="1.5"><circle cx="12.5" cy="12.5" r="11"/><path d="M8.5 9.5C8.5 7 10.5 5.5 12.5 5.5S16.5 7 16.5 9.5C16.5 12 12.5 12.5 12.5 15.5"/><circle cx="12.5" cy="19" r="0.8" fill="#2f3138"/></svg>
<svg style="left:1874px;top:470px" width="26" height="26" viewBox="0 0 26 26" fill="none" stroke="#2f3138" stroke-width="1.5"><path d="M2 9L4 2H20L22 9C22 11 20 12 18.5 12S15 11 15 9C15 11 13.5 12 12 12S9 11 9 9C9 11 7.5 12 6 12S2 11 2 9Z"/><path d="M4 12V24H11M8 24V17H11"/><path d="M14 24C14 19 17 16 21 16C21 21 18 24 14 24Z M17 24C18 22 20 20 24 20C24 23 22 25 17 24Z"/></svg>
<svg style="left:1874px;top:521px" width="25" height="28" viewBox="0 0 25 28" fill="none" stroke="#2f3138" stroke-width="1.5"><path d="M8 26H17V22C21 20 24 17 24 12C24 5.5 19 1 12.5 1S1 5.5 1 12C1 17 4 20 8 22Z"/><path d="M14 6L9 14H13L11 20L16 12H12Z"/></svg>
<svg style="left:1875px;top:946px" width="25" height="8" viewBox="0 0 25 8" fill="none" stroke="#2f3138" stroke-width="1.6"><circle cx="4" cy="4" r="3"/><circle cx="12.5" cy="4" r="3"/><circle cx="21" cy="4" r="3"/></svg>
<!-- mouse cursor -->
<svg style="left:1845px;top:587px" width="14" height="21" viewBox="0 0 14 21"><path d="M1 1V17L5 13.5L8 20L10.5 19L7.5 12.5H13Z" fill="#fff" stroke="#000" stroke-width="1.1" stroke-linejoin="round"/></svg>
<div id="status" class="a">
  <div class="t" style="left:15px;top:13px;font-size:18.5px;color:#2f3138">页面: 10/31</div>
  <div class="a" style="left:118px;top:9px;width:1px;height:24px;background:#e3e4e8"></div>
  <div class="t" style="left:132px;top:13px;font-size:18.5px;color:#2f3138">字数: 11822</div>
  <div class="a" style="left:237px;top:9px;width:1px;height:24px;background:#e3e4e8"></div>
  <div class="a" style="left:240px;top:4px;width:110px;height:35px;background:#edf0f6"></div>
  <svg style="left:246px;top:11px" width="23" height="21" viewBox="0 0 23 21" fill="none" stroke="#2f3138" stroke-width="1.5"><path d="M1 1H22V19H13L11.5 20.5L10 19H1Z"/><path d="M7 9L10.5 12.5L16 6"/></svg>
  <div class="t" style="left:272px;top:13px;font-size:18.5px;color:#2f3138">拼写检查</div>
  <svg style="left:351px;top:20px" width="8" height="5"><path d="M0 0H8L4 5Z" fill="#6b6e76"/></svg>
  <div class="a" style="left:367px;top:9px;width:1px;height:24px;background:#e3e4e8"></div>
  <svg style="left:381px;top:11px" width="23" height="21" viewBox="0 0 23 21" fill="none" stroke="#2f3138" stroke-width="1.5"><path d="M1 1H22V19H13L11.5 20.5L10 19H1Z"/><path d="M8 6L15 13M15 6L8 13"/></svg>
  <div class="t" style="left:410px;top:13px;font-size:18.5px;color:#2f3138">文档校对</div>
  <div class="t" style="left:509px;top:13px;font-size:18.5px;color:#2f3138">兼容模式</div>
  <div class="a" style="left:588px;top:9px;width:1px;height:24px;background:#e3e4e8"></div>
  <svg style="left:608px;top:11px" width="22" height="23" viewBox="0 0 22 23" fill="none" stroke="#2f3138" stroke-width="1.5"><path d="M1 4V1H16V4M8.5 1V19M5 19H12"/><path d="M14 12C14 10 15.5 9 17 9S20 10 20 12C20 14 17 14 17 16.5"/><circle cx="17" cy="20" r="0.7" fill="#2f3138"/></svg>
  <div class="t" style="left:636px;top:13px;font-size:18.5px;color:#2f3138">缺失字体</div>
  <!-- right -->
  <svg style="left:1205px;top:9px" width="26" height="24" viewBox="0 0 26 24" fill="none" stroke="#2f3138" stroke-width="1.6"><path d="M1 15C4 10 8 8 13 8S22 10 25 15C22 20 18 22 13 22S4 20 1 15Z"/><circle cx="13" cy="15" r="4"/><path d="M13 1V4M4 3L6 6M22 3L20 6"/></svg>
  <div class="a" style="left:1245px;top:9px;width:1px;height:24px;background:#e3e4e8"></div>
  <div class="a" style="left:1257px;top:4px;width:35px;height:35px;border-radius:3px;background:#dfe0e4"></div>
  <svg style="left:1264px;top:11px" width="22" height="22" viewBox="0 0 22 22" fill="none" stroke="#2f3138" stroke-width="1.5"><path d="M1 1H15L21 7V21H1Z" fill="#e9eaee"/><path d="M5 9H17M5 14H17"/></svg>
  <svg style="left:1303px;top:12px" width="23" height="21" viewBox="0 0 23 21" fill="none" stroke="#2f3138" stroke-width="1.5"><path d="M1 1H3M7 1H22M1 7H3M7 7H22M1 13H3M7 13H22M1 20H3M7 20H22" /></svg>
  <svg style="left:1341px;top:11px" width="23" height="23" viewBox="0 0 23 23" fill="none" stroke="#2f3138" stroke-width="1.5"><path d="M1 1H9C10 1 11.5 2 11.5 3C11.5 2 13 1 14 1H22V20H14L11.5 22L9 20H1Z"/><path d="M11.5 3V21"/></svg>
  <svg style="left:1379px;top:11px" width="23" height="23" viewBox="0 0 23 23" fill="none" stroke="#2f3138" stroke-width="1.5"><circle cx="11.5" cy="11.5" r="10.5"/><ellipse cx="11.5" cy="11.5" rx="4.5" ry="10.5"/><path d="M1 11.5H22M3 6H20M3 17H20"/></svg>
  <svg style="left:1419px;top:10px" width="25" height="24" viewBox="0 0 25 24" fill="none" stroke="#2f3138" stroke-width="1.5"><path d="M5 16L18 2L23 6L10 20H5Z"/><path d="M16 4L21 8M5 16C3 17 2 19 1.5 22"/><path d="M1.5 23H23"/></svg>
  <div class="a" style="left:1461px;top:9px;width:1px;height:24px;background:#e3e4e8"></div>
  <svg style="left:1478px;top:11px" width="23" height="22" viewBox="0 0 23 22" fill="none" stroke="#2f3138" stroke-width="1.6"><path d="M1 6V1H6M17 1H22V6M22 16V21H17M6 21H1V16"/><rect x="7" y="6" width="9" height="10"/></svg>
  <div class="t" style="left:1511px;top:13px;font-size:18.5px;color:#5a5d66">70%</div>
  <svg style="left:1556px;top:20px" width="8" height="5"><path d="M0 0H8L4 5Z" fill="#6b6e76"/></svg>
  <svg style="left:1582px;top:20px" width="16" height="3"><path d="M0 1.5H16" stroke="#2f3138" stroke-width="2.4"/></svg>
  <div class="a" style="left:1616px;top:21px;width:66px;height:1.5px;background:#3b3e46"></div>
  <div class="a" style="left:1684px;top:21px;width:137px;height:1px;background:#d5d6da"></div>
  <div class="a" style="left:1718px;top:17px;width:1px;height:9px;background:#d5d6da"></div>
  <div class="a" style="left:1675px;top:13px;width:18px;height:18px;border-radius:50%;background:#ebebed;border:1.5px solid #3b3e46"></div>
  <svg style="left:1840px;top:14px" width="16" height="16"><path d="M8 0V16M0 8H16" stroke="#2f3138" stroke-width="2.4"/></svg>
  <svg style="left:1874px;top:11px" width="23" height="22" viewBox="0 0 23 22" fill="none" stroke="#2f3138" stroke-width="1.6"><path d="M1 1L7 7M1 1V6M1 1H6M22 1L16 7M22 1V6M22 1H17M1 21L7 15M1 21V16M1 21H6M22 21L16 15M22 21V16M22 21H17"/></svg>
</div>
<div id="task" class="a">
  <svg style="left:24px;top:18px" width="25" height="25" viewBox="0 0 25 25" fill="#fff"><path d="M0 3.5L10 2V12H0Z M11.5 1.8L25 0V12H11.5Z M0 13.5H10V23L0 21.5Z M11.5 13.5H25V25L11.5 23.2Z"/></svg>
  <svg style="left:95px;top:14px" width="32" height="32" viewBox="0 0 32 32"><g fill="#fff"><circle cx="8" cy="8.5" r="8"/><circle cx="24" cy="8.5" r="8"/><circle cx="8" cy="23.5" r="8"/><circle cx="24" cy="23.5" r="8"/><rect x="4" y="4" width="24" height="24"/></g><g fill="none" stroke="#1a1f28" stroke-width="1.4"><path d="M16 16A6.5 6.5 0 0 1 3.5 17.5"/><path d="M16 16A6.5 6.5 0 0 1 14.5 3"/><path d="M16 16A6.5 6.5 0 0 1 28.5 14.5"/><path d="M16 16A6.5 6.5 0 0 1 17.5 29"/></g></svg>
  <div class="a" style="left:150px;top:8px;width:205px;height:43px;background:#e9e9ea"></div>
  <svg style="left:157px;top:19px" width="24" height="24" viewBox="0 0 24 24"><path d="M3 13C3 7 7 4 12 4C17 4 20 8 20 13H7C7 17 10 19 13 19C16 19 18 17 19 16V20C17 22 15 22.5 12.5 22.5C6 22.5 3 18 3 13Z M7 10.5H16C16 8 14.5 6.5 12 6.5C9.5 6.5 7.5 8 7 10.5Z" fill="#1f8ae8"/><path d="M1 22C0 18 6 5 20 1C23 0.5 24 2 23 5" fill="none" stroke="#1f8ae8" stroke-width="1.4"/></svg>
  <svg style="left:184px;top:28px" width="7" height="5"><path d="M0 5H7L3.5 0Z" fill="#999"/></svg>
  <div class="t" style="left:200px;top:21px;font-size:15px;color:#222">保安抛扔学生外卖</div>
  <div class="a" style="left:355px;top:8px;width:70px;height:43px;background:#3b8ff0"></div>
  <div class="t" style="left:360px;top:21px;font-size:15.5px;color:#fff">搜索一下</div>
  <div class="a" style="left:436px;top:14px;width:1px;height:34px;background:#4b5566"></div>
  <div class="a" style="left:440px;top:14px;width:1px;height:34px;background:#3b4455"></div>
  <!-- IE -->
  <svg style="left:477px;top:12px" width="36" height="36" viewBox="0 0 36 36"><path d="M5 19C5 11 11 7 18 7C25 7 30 12 30 19H12C12 24 15 27 19 27C23 27 26 25 27 23H30C28 29 24 32 18 32C10 32 5 26 5 19Z M12 15.5H23C23 12 21 10 17.5 10C14.5 10 12.5 12 12 15.5Z" fill="#2aa7e8"/><path d="M3 31C-1 25 9 6 30 3C35 2.5 36 6 33 11" fill="none" stroke="#f2c61f" stroke-width="2.4"/></svg>
  <!-- 360 browser -->
  <svg style="left:554px;top:13px" width="34" height="34" viewBox="0 0 34 34"><circle cx="17" cy="17" r="15.5" fill="#5cbc3a" stroke="#fff" stroke-width="1.8"/><path d="M8 18C8 12 12 9 17 9C22 9 26 13 26 18H12.5C13 22 15 24 18 24C21 24 23 23 24 21H26C25 26 22 28 17.5 28C12 28 8 24 8 18Z M12.5 15.5H21.5C21 12.5 19.5 11 17 11C14.5 11 13 12.5 12.5 15.5Z" fill="#fff"/><path d="M5 33C6 28 10 24 12 22" stroke="#5cbc3a" stroke-width="2" fill="none"/><path d="M22 3C26 2 30 3 31 5" stroke="#5cbc3a" stroke-width="2" fill="none"/></svg>
  <!-- explorer -->
  <svg style="left:628px;top:15px" width="34" height="30" viewBox="0 0 34 30"><path d="M1 3C1 2 2 1 3 1H12L15 4H31C32 4 33 5 33 6V27C33 28 32 29 31 29H3C2 29 1 28 1 27Z" fill="#f5c342"/><path d="M1 8H33V27C33 28 32 29 31 29H3C2 29 1 28 1 27Z" fill="#fad765"/><path d="M10 29V19H24V29" fill="none" stroke="#2f8ee0" stroke-width="3.5"/></svg>
  <!-- cat -->
  <svg style="left:702px;top:12px" width="36" height="36" viewBox="0 0 36 36"><circle cx="18" cy="18" r="17.5" fill="#ee7a1a"/><circle cx="18" cy="18" r="15" fill="#f39024"/><path d="M8 10L11 5L15 9C17 8.5 19 8.5 21 9L25 5L28 10C30 14 30 21 27 25C25 28 22 30 18 30C14 30 11 28 9 25C6 21 6 14 8 10Z" fill="#1c1c1c"/><ellipse cx="13" cy="17" rx="4" ry="2.3" fill="#f2f2f2"/><ellipse cx="23" cy="17" rx="4" ry="2.3" fill="#f2f2f2"/><ellipse cx="13" cy="17" rx="2.2" ry="1.3" fill="#ee7a1a"/><ellipse cx="23" cy="17" rx="2.2" ry="1.3" fill="#ee7a1a"/><rect x="16" y="26" width="4" height="4" fill="#fff"/></svg>
  <!-- wps active -->
  <div class="a" style="left:759px;top:0;width:73px;height:60px;background:#4d5667"></div>
  <svg style="left:777px;top:16px" width="37" height="29" viewBox="0 0 37 29"><defs><linearGradient id="wr" x1="0" y1="0" x2="0" y2="1"><stop offset="0" stop-color="#f5222a"/><stop offset="1" stop-color="#f04a1a"/></linearGradient></defs><path d="M1 1H16L13 9H10L13 18L9 27Z" fill="url(#wr)"/><path d="M1 1L9 27H14L6 1Z" fill="#f01e24"/><path d="M9 27H16L27 1H20Z" fill="#ff6a1e"/><path d="M20 1H36L28 27H21L24 17L27 9H22Z" fill="url(#wr)"/><path d="M21 27H28L36 1H29Z" fill="#f23a1c"/></svg>
  <div class="a" style="left:615px;top:57px;width:61px;height:3px;background:#7cb8ec"></div>
  <div class="a" style="left:690px;top:57px;width:61px;height:3px;background:#7cb8ec"></div>
  <div class="a" style="left:759px;top:57px;width:73px;height:3px;background:#7cb8ec"></div>
  <!-- weather -->
  <svg style="left:981px;top:15px" width="36" height="34" viewBox="0 0 36 34"><circle cx="24" cy="10" r="7" fill="#f7b731"/><path d="M6 28C2 28 1 25 1 23C1 20 3 18 6 18C6 13 10 10 15 10C20 10 24 13 25 17C28 17 31 19 31 23C31 26 29 28 26 28Z" fill="#e9edf2"/><circle cx="28" cy="29" r="4.3" fill="#e8243b"/></svg>
  <div class="t" style="left:1027px;top:21px;font-size:22px;color:#fff">28°C</div>
  <div class="t" style="left:1088px;top:21px;font-size:22px;color:#fff">多云</div>
  <div class="t" style="left:1049px;top:8px;font-size:19px;color:#fff">59%</div>
  <div class="t" style="left:1032px;top:31px;font-size:18px;color:#fff">内存占用</div>
</div>
<div class="a" style="left:0;top:1020px;width:1920px;height:60px">
  <!-- red cat -->
  <svg style="left:1152px;top:17px" width="25" height="25" viewBox="0 0 25 25"><circle cx="12.5" cy="12.5" r="12" fill="#e5242b"/><path d="M5 7L8 4L10 7C11.5 6.6 13.5 6.6 15 7L17 4L20 7C21 10 21 15 19 18C17.5 20 15 21 12.5 21C10 21 7.5 20 6 18C4 15 4 10 5 7Z" fill="#1a1a1a"/><ellipse cx="9" cy="12" rx="2.8" ry="1.6" fill="#eee"/><ellipse cx="16" cy="12" rx="2.8" ry="1.6" fill="#eee"/><rect x="11" y="17" width="3" height="3" fill="#fff"/></svg>
  <!-- usb blue -->
  <svg style="left:1189px;top:15px" width="22" height="27" viewBox="0 0 22 27"><rect x="5" y="1" width="12" height="8" fill="#cfd8e3"/><rect x="7" y="3" width="2.5" height="3" fill="#5b6b80"/><rect x="12.5" y="3" width="2.5" height="3" fill="#5b6b80"/><rect x="1" y="9" width="20" height="17" rx="3" fill="#3d8fd9"/><path d="M11 12V23M8 16L11 13L14 16" stroke="#1e5fa0" stroke-width="1.3" fill="none"/></svg>
  <!-- tc -->
  <svg style="left:1224px;top:15px" width="25" height="27" viewBox="0 0 25 27"><rect x="1" y="1" width="23" height="23" rx="3" fill="#2f86e0"/><path d="M8 6V16C8 18 9.5 19 11.5 19H15M5 9H17L19 6" stroke="#fff" stroke-width="2.6" fill="none"/><circle cx="19" cy="21" r="5.5" fill="#4cc060" stroke="#1f2a3a" stroke-width="1"/><path d="M16.5 21L18.5 23L22 19.5" stroke="#fff" stroke-width="1.5" fill="none"/></svg>
  <!-- shield -->
  <svg style="left:1260px;top:15px" width="25" height="28" viewBox="0 0 25 28"><path d="M12.5 1L24 5V13C24 20 19 25 12.5 27C6 25 1 20 1 13V5Z" fill="#2d7fe8"/><path d="M12.5 4L21 7V13C21 18.5 17 22 12.5 24C8 22 4 18.5 4 13V7Z" fill="#fff"/><path d="M6.5 11L12.5 19L19 10" stroke="#2d7fe8" stroke-width="2.8" fill="none"/></svg>
  <!-- wifi -->
  <svg style="left:1299px;top:17px" width="20" height="22" viewBox="0 0 20 22" fill="none" stroke="#d8dbe0" stroke-width="1.5"><path d="M1 21C1 10 9 2 19 1M5 21C5 13 11 6 19 5M9 21C9 15 13 10 19 9M13 21C13 17 15 14 19 13"/><circle cx="17.5" cy="20" r="1.5" fill="#fff" stroke="none"/></svg>
  <!-- bell -->
  <svg style="left:1333px;top:16px" width="23" height="26" viewBox="0 0 23 26"><path d="M11.5 1C12.5 1 13 2 13 3C17 4 19 7 19 11V17L22 21H1L4 17V11C4 7 6 4 10 3C10 2 10.5 1 11.5 1Z" fill="#fff"/><path d="M8.5 22H14.5C14.5 24 13 25 11.5 25S8.5 24 8.5 22Z" fill="#fff"/></svg>
  <!-- nvidia -->
  <svg style="left:1368px;top:15px" width="24" height="25" viewBox="0 0 24 25"><rect x="0.5" y="0.5" width="23" height="24" fill="#2a3a2a" stroke="#444" stroke-width="1"/><ellipse cx="12" cy="13" rx="9" ry="5.5" fill="#76b900"/><ellipse cx="13" cy="13" rx="5" ry="3" fill="#2a3a2a"/><ellipse cx="13.5" cy="13" rx="2.5" ry="1.5" fill="#76b900"/></svg>
  <!-- qq x2 -->
  <svg style="left:1406px;top:15px" width="19" height="28" viewBox="0 0 19 28"><ellipse cx="9.5" cy="9" rx="7" ry="8.5" fill="#111"/><ellipse cx="9.5" cy="18" rx="8" ry="8" fill="#111"/><ellipse cx="9.5" cy="19" rx="5.5" ry="6.5" fill="#fff"/><ellipse cx="9.5" cy="10" rx="5" ry="4" fill="#fff"/><circle cx="7.5" cy="8" r="1.3" fill="#111"/><circle cx="11.5" cy="8" r="1.3" fill="#111"/><path d="M6 11H13L9.5 13Z" fill="#f5b700"/><path d="M2 14H17L15 17H4Z" fill="#e52b2b"/><ellipse cx="5" cy="26" rx="4" ry="1.8" fill="#f5b700"/><ellipse cx="14" cy="26" rx="4" ry="1.8" fill="#f5b700"/></svg>
  <svg style="left:1441px;top:15px" width="19" height="28" viewBox="0 0 19 28"><ellipse cx="9.5" cy="9" rx="7" ry="8.5" fill="#111"/><ellipse cx="9.5" cy="18" rx="8" ry="8" fill="#111"/><ellipse cx="9.5" cy="19" rx="5.5" ry="6.5" fill="#fff"/><ellipse cx="9.5" cy="10" rx="5" ry="4" fill="#fff"/><circle cx="7.5" cy="8" r="1.3" fill="#111"/><circle cx="11.5" cy="8" r="1.3" fill="#111"/><path d="M6 11H13L9.5 13Z" fill="#f5b700"/><path d="M2 14H17L15 17H4Z" fill="#e52b2b"/><ellipse cx="5" cy="26" rx="4" ry="1.8" fill="#f5b700"/><ellipse cx="14" cy="26" rx="4" ry="1.8" fill="#f5b700"/></svg>
  <!-- power/battery -->
  <svg style="left:1475px;top:20px" width="26" height="18" viewBox="0 0 26 18" fill="none" stroke="#fff" stroke-width="1.5"><path d="M3 1V5M7 1V5M1 5H9V9C9 11 7 12 5 12S1 11 1 9Z"/><path d="M5 12V17"/><rect x="10" y="5" width="14" height="11"/><path d="M24 8V13" stroke-width="2.5"/></svg>
  <!-- bluetooth -->
  <svg style="left:1515px;top:15px" width="19" height="28" viewBox="0 0 19 28"><ellipse cx="9.5" cy="14" rx="9" ry="13.5" fill="#2c7de0"/><path d="M5 9L13 17L9.5 21V7L13 11L5 19" stroke="#fff" stroke-width="1.6" fill="none"/></svg>
  <!-- usb drive -->
  <svg style="left:1552px;top:14px" width="21" height="30" viewBox="0 0 21 30" fill="none" stroke="#fff" stroke-width="1.4"><rect x="3" y="1" width="9" height="6"/><path d="M1 7H14V29H1Z"/><path d="M14 25L16 28L20 22" stroke="#aaa"/></svg>
  <!-- 360 green -->
  <svg style="left:1583px;top:17px" width="24" height="24" viewBox="0 0 24 24"><circle cx="12" cy="12" r="11.5" fill="#4cb648"/><path d="M1 10C4 7 9 6 13 7C17 8 21 9 23 11C23 14 20 18 13 17C8 16 3 14 1 13Z" fill="#f4d21e"/><path d="M12 7V17M7 12H17" stroke="#1e7c1e" stroke-width="3"/></svg>
  <!-- speaker -->
  <svg style="left:1620px;top:18px" width="24" height="22" viewBox="0 0 24 22" fill="none" stroke="#fff" stroke-width="1.4"><path d="M1 7H5L11 1V21L5 15H1Z"/><path d="M14 8C15 9 15 13 14 14M17 5C19 8 19 14 17 17M20 3C23 7 23 15 20 19" stroke="#bbb"/></svg>
  <div class="t" style="left:1656px;top:19px;font-size:20px;color:#fff">中</div>
  <!-- Q blue -->
  <svg style="left:1698px;top:16px" width="25" height="25" viewBox="0 0 25 25"><rect x="0.5" y="0.5" width="24" height="24" rx="5" fill="#3c8bf0"/><circle cx="12" cy="12" r="6" fill="none" stroke="#fff" stroke-width="2.6"/><path d="M15 15L19 19" stroke="#fff" stroke-width="2.6"/><circle cx="19" cy="19" r="2.2" fill="#5ad06a"/></svg>
  <div class="t" style="left:1750px;top:8px;font-size:19.5px;color:#fff">11:33 周二</div>
  <div class="t" style="left:1748px;top:32px;font-size:19.5px;color:#fff">2022/9/13</div>
  <div class="a" style="left:1868px;top:18px;width:24px;height:22px;background:#fff"></div>
  <svg style="left:1875px;top:22px" width="10" height="14"><path d="M0 0L10 7L0 14Z" fill="#111"/></svg>
  <div class="a" style="left:1884px;top:29px;width:20px;height:20px;background:#e00d0d"></div>
  <div class="t" style="left:1889px;top:33px;font-size:13px;color:#fff">3</div>
  <div class="a" style="left:1913px;top:0;width:2px;height:60px;background:#4a4d52"></div>
</div>
<!-- net widget -->
<div class="a" style="left:1741px;top:186px;width:120px;height:63px;border-radius:31.5px;background:#2c303b;box-shadow:0 2px 6px rgba(0,0,0,.25)"></div>
<div class="a" style="left:1763px;top:216px;width:80px;height:1px;background:#3a3e49"></div>
<svg style="left:1757px;top:195px" width="11" height="11"><path d="M5.5 0L11 6H7.5V11H3.5V6H0Z" fill="#3ba3f0"/></svg>
<svg style="left:1757px;top:228px" width="11" height="11"><path d="M5.5 11L11 5H7.5V0H3.5V5H0Z" fill="#2dbb45"/></svg>
<div class="t" style="left:1776px;top:194px;font-size:15px;font-weight:bold;color:#e6e7ea">0.8</div>
<div class="t" style="left:1800px;top:197px;font-size:12.5px;color:#a9adb5">K/s</div>
<div class="t" style="left:1776px;top:227px;font-size:15px;font-weight:bold;color:#e6e7ea">8.3</div>
<div class="t" style="left:1800px;top:230px;font-size:12.5px;color:#a9adb5">K/s</div>
<div class="a" style="left:1831px;top:174px;width:88px;height:88px;border-radius:50%;background:#4a4e59;border:3px solid #3b3e48;box-shadow:0 2px 6px rgba(0,0,0,.3)"></div>
<svg style="left:1831px;top:174px" width="88" height="88" viewBox="0 0 88 88"><defs><linearGradient id="rg" x1="0" y1="0" x2="0" y2="1"><stop offset="0" stop-color="#3fc9b0"/><stop offset="0.6" stop-color="#8fd36a"/><stop offset="1" stop-color="#e2c94a"/></linearGradient></defs><path d="M50.6 6.6A38 38 0 1 1 25 77" fill="none" stroke="url(#rg)" stroke-width="2.6"/></svg>
<div class="t" style="left:1846px;top:198px;font-size:37px;color:#eef0f2">59</div>
<div class="t" style="left:1891px;top:219px;font-size:12px;font-weight:bold;color:#eef0f2">%</div>
<svg style="left:1876px;top:254px" width="22" height="21" viewBox="0 0 22 21" fill="none" stroke="#2f3138" stroke-width="1.5"><path d="M8 14L19 2L21 4L10 16Z"/><path d="M8 14C5 14 3 16 1 20H10V16"/><path d="M1 20H21"/></svg>
<!-- memory widget (left) -->
<div class="a" style="left:3px;top:9px;width:12px;height:86px;border-radius:6px;background:linear-gradient(#243a6a 0%,#243a6a 44%,#666 44%,#666 100%);border:1px solid #b9c6e8"></div>
<div class="a" style="left:4px;top:77px;width:10px;height:15px;background:repeating-linear-gradient(#3d9a4e 0 2px,#666 2px 3.5px)"></div>


</body></html>
